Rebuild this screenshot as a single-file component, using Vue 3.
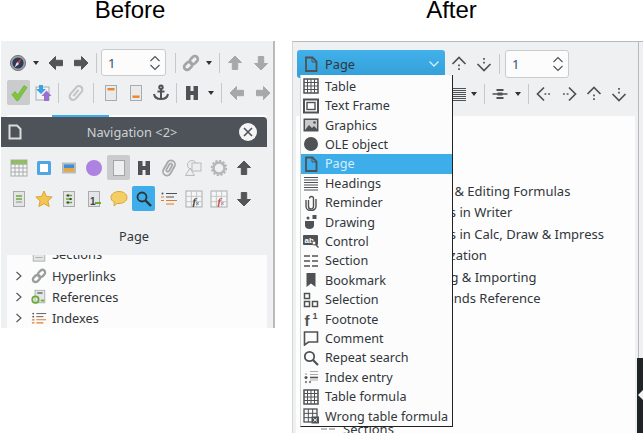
<script setup>
const dark = '#4f5254'
const gridLines = (x, y, w, h, nx, ny, col, sw = 1) => {
  let out = ''
  for (let i = 1; i < nx; i++) {
    const p = x + (w * i) / nx
    out += `<path d="M${p} ${y}V${y + h}" stroke="${col}" stroke-width="${sw}"/>`
  }
  for (let i = 1; i < ny; i++) {
    const p = y + (h * i) / ny
    out += `<path d="M${x} ${p}H${x + w}" stroke="${col}" stroke-width="${sw}"/>`
  }
  return out
}
const arrow = (col, rot) =>
  `<path transform="rotate(${rot} 9 9)" d="M2 9 8.500 2.500v3.800H15.500v5.400H8.500v3.800z" fill="${col}" stroke="${col}" stroke-linejoin="round"/>`
const dotted = (rot) =>
  `<g transform="rotate(${rot} 9 9)" fill="none" stroke="#4f5254" stroke-width="1.700"><path d="M2.500 9 9 2.500 15.500 9"/><path d="M9 9.500v1.800M9 13.200v1.800"/></g>`
const docBase = `<rect x="3.500" y="1.500" width="11" height="15" fill="#e4e5e6" stroke="#a9abad"/>`

const icons = {
  // toolbars
  compass: `<circle cx="9" cy="9" r="7.600" fill="#9b9da0" stroke="#77797c"/><circle cx="9" cy="9" r="5.600" fill="#2c3a5c"/><path d="M12.500 4.500 8 8l2 2z" fill="#d8402f"/><path d="M5.500 13.500 8 8l2 2z" fill="#e8e8e8"/>`,
  left: arrow('#555', 0),
  right: arrow('#555', 180),
  up: arrow('#555', 90),
  down: arrow('#555', 270),
  leftGray: arrow('#a6a8aa', 0),
  rightGray: arrow('#a6a8aa', 180),
  upGray: arrow('#a6a8aa', 90),
  downGray: arrow('#a6a8aa', 270),
  link: `<g transform="rotate(-45 9 9)" fill="none" stroke="#a2a4a6" stroke-width="2.600"><rect x="0.500" y="6" width="9" height="6" rx="3"/><rect x="8.500" y="6" width="9" height="6" rx="3"/></g>`,
  check: `<path d="M2 10.500 5 7.500l2.800 3.400L14 1.500l3 2L8.200 16.500H6.500z" fill="#7ec63b" stroke="#62a52a" stroke-width=".6"/>`,
  update: `<rect x="2" y="3" width="13" height="13" fill="#f2f3f4" stroke="#a9abad"/><path d="M5 1h4v4h3L7 10 2 5h3z" fill="#3da2e5"/><path d="M12.500 6.500 17.500 12H15v5h-5v-5H7.500z" fill="#9a6fd0"/>`,
  clipGray: `<g transform="rotate(40 9 9)" fill="none" stroke="#c1c3c5" stroke-width="2"><rect x="5.500" y="1" width="7" height="16" rx="3.500"/><path d="M9 5v8"/></g>`,
  header: `<rect x="3.500" y="1.500" width="11" height="15" fill="#e9eaeb" stroke="#a9abad"/><rect x="5.500" y="4" width="7" height="2.400" fill="#e8862a"/>`,
  footer: `<rect x="3.500" y="1.500" width="11" height="15" fill="#e9eaeb" stroke="#a9abad"/><rect x="5.500" y="11.500" width="7" height="2.400" fill="#e8862a"/>`,
  anchor: `<g fill="none" stroke="#505356" stroke-width="2"><circle cx="9" cy="3.200" r="1.700"/><path d="M9 5v10.500M5.500 7.500h7M2 10c.5 3.500 3.500 5 7 5s6.500-1.500 7-5"/></g>`,
  h: `<path d="M3 2h4.500v5h3V2H15v14h-4.500v-5h-3v5H3z" fill="#4f5254"/>`,
  strike: `<path d="M5.500 5h7M5.500 13h7" stroke="#4f5254" stroke-width="2"/><path d="M1.500 9H7M11 9h5.500" stroke="#4f5254" stroke-width="1.500"/><rect x="6.500" y="7.500" width="5" height="3" fill="#4f5254"/>`,
  lines: `<path d="M2 3.500h14M2 5.500h14M2 7.500h14M2 9.500h14M2 11.500h14M2 13.500h14M2 15.500h14" stroke="#4f5254" stroke-width="1"/>`,
  dotUp: dotted(0),
  dotDown: dotted(180),
  dotLeft: dotted(270),
  dotRight: dotted(90),

  // navigator panel
  navTable: `<rect x="1" y="1" width="16" height="16" fill="#f6f6f6" stroke="#a9abad"/><rect x="1" y="1" width="16" height="4.500" fill="#8cc44b"/>${gridLines(1, 1, 16, 16, 4, 4, '#a9abad')}`,
  navFrame: `<rect x="2" y="2" width="14" height="14" rx="1.500" fill="#4ea6e6"/><rect x="5" y="5" width="8" height="8" fill="#fff"/>`,
  navImage: `<rect x="2" y="3.500" width="14" height="11" fill="#b9bbbd"/><rect x="4" y="5.500" width="10" height="3.500" fill="#3d8fd8"/><rect x="4" y="9" width="10" height="3.500" fill="#eba53c"/>`,
  navOle: `<circle cx="9" cy="9" r="8" fill="#ae82e0"/>`,
  navPage: `<rect x="3.500" y="1.500" width="11" height="15" fill="#eeeff0" stroke="#a3a5a7"/>`,
  navClip: `<g transform="rotate(30 9 9)" fill="none" stroke="#a6a8aa" stroke-width="1.800"><rect x="5" y="1" width="8" height="16" rx="4"/><rect x="7.500" y="4" width="3" height="9" rx="1.500"/></g>`,
  navDraw: `<g fill="#eee" stroke="#b8babc"><circle cx="7" cy="6" r="4.500"/><rect x="7" y="4" width="9" height="8"/><path d="M5 9 9.500 16.500H.5z"/></g>`,
  navGear: `<circle cx="9" cy="9" r="5.500" fill="none" stroke="#b4b6b8" stroke-width="2.400"/><circle cx="9" cy="9" r="7.300" fill="none" stroke="#b4b6b8" stroke-width="1.800" stroke-dasharray="2.300 1.500"/>`,
  navHead: `${docBase}<path d="M6 6h6M6 9h6" stroke="#6aab35" stroke-width="1.500"/><path d="M6 12h6" stroke="#8e9092"/>`,
  navStar: `<path d="M9 1l2.400 5.400 5.800.6-4.300 3.900 1.200 5.700L9 13.700l-5.100 2.900 1.200-5.700L.8 7l5.800-.6z" fill="#f3c552" stroke="#dba436"/>`,
  navSection: `${docBase}<path d="M6 5.500h6M6 9h6M6 12.500h6" stroke="#6aab35" stroke-width="1.300"/><rect x="7" y="4.500" width="2" height="2" fill="#444"/><rect x="9.500" y="8" width="2" height="2" fill="#444"/><rect x="7" y="11.500" width="2" height="2" fill="#444"/>`,
  navNote: `${docBase}<text x="5" y="15" font-family="Liberation Sans" font-weight="700" font-size="10" fill="#444">1</text><path d="M10 13h6" stroke="#6aab35" stroke-width="2"/>`,
  navComment: `<path d="M9 1.500c4.500 0 8 2.500 8 6s-3.500 6-8 6c-.7 0-1.300 0-2-.2L4 16l.3-3.800C2.300 11.200 1 9.500 1 7.500c0-3.500 3.500-6 8-6z" fill="#f5ce63" stroke="#d5a63a"/>`,
  navSearch: `<circle cx="7" cy="7" r="4.500" fill="none" stroke="#2e3438" stroke-width="1.800"/><path d="M10.500 10.500 16 16" stroke="#2e3438" stroke-width="2.400"/>`,
  navIndex: `<path d="M6 3.500h11M6 7h8" stroke="#4f5254" stroke-width="1"/><path d="M1 7h3M1 10.500h3M6 10.500h11M6 14h8" stroke="#e07b2e" stroke-width="1.200"/><circle cx="2.500" cy="3.500" r="1" fill="#4f5254"/>`,
  navFx: `<rect x="1" y="1" width="16" height="16" fill="#f6f6f6" stroke="#a9abad"/>${gridLines(1, 1, 16, 16, 3, 3, '#c3c5c7')}<text x="7.500" y="15" font-family="Liberation Serif" font-style="italic" font-weight="700" font-size="11" fill="#444">f</text><text x="11" y="15" font-family="Liberation Sans" font-size="6" fill="#444">x</text>`,
  navFxRed: `<rect x="1" y="1" width="16" height="16" fill="#f6f6f6" stroke="#a9abad"/>${gridLines(1, 1, 16, 16, 3, 3, '#c3c5c7')}<text x="7.500" y="15" font-family="Liberation Serif" font-style="italic" font-weight="700" font-size="11" fill="#c0504d">f</text><text x="11" y="15" font-family="Liberation Sans" font-size="6" fill="#c0504d">x</text>`,
  navHyper: `<g transform="rotate(-45 9 9)" fill="none" stroke="#9a9c9e" stroke-width="2.600"><rect x="0.500" y="6" width="9" height="6" rx="3"/><rect x="8.500" y="6" width="9" height="6" rx="3"/></g>`,
  navRef: `<rect x="4.500" y="1.500" width="11" height="14" fill="#e4e5e6" stroke="#a9abad"/><path d="M7 4.500h6" stroke="#555" stroke-width="1.400"/><circle cx="5" cy="12" r="3.600" fill="none" stroke="#6aab35" stroke-width="2"/><rect x="11" y="12" width="4" height="2" fill="#6aab35"/>`,
  navIndexTree: `<path d="M6 4h11M6 7.500h8" stroke="#4f5254"/><path d="M6 11h11M6 14.500h8" stroke="#e07b2e" stroke-width="1.200"/><circle cx="2.500" cy="4" r="1" fill="#4f5254"/><circle cx="2.500" cy="7.500" r="1" fill="#4f5254"/><path d="M1 11h3M1 14.500h3" stroke="#e07b2e" stroke-width="1.400"/>`,
  navSections: `<rect x="2.500" y="1" width="13" height="16" fill="#e4e5e6" stroke="#a9abad"/><path d="M5 13h8" stroke="#a9abad"/>`
}

const menuIcons = {
  table: `<rect x="1" y="1" width="14" height="14" fill="none" stroke="${dark}" stroke-width="1.500"/>${gridLines(1, 1, 14, 14, 4, 4, dark)}`,
  frame: `<rect x="1" y="1.500" width="14" height="13" fill="none" stroke="${dark}" stroke-width="2"/><rect x="4" y="4.500" width="8" height="7" fill="none" stroke="${dark}" stroke-width="1.400"/>`,
  graphics: `<rect x=".5" y="1.500" width="15" height="13" fill="${dark}"/><rect x="2" y="3" width="12" height="10" fill="#c9cacb"/><path d="M2 13l4-5 3 3 2-2 3 3v1z" fill="${dark}"/><circle cx="11.500" cy="5.500" r="1.300" fill="${dark}"/>`,
  ole: `<circle cx="8" cy="8" r="7" fill="${dark}"/>`,
  page: `<path d="M3 1.500h6.500L13.500 5.500v9.500H3z" fill="none" stroke="${dark}" stroke-width="1.800"/><path d="M9 1.500v4.500h4.500" fill="none" stroke="${dark}" stroke-width="1"/>`,
  headings: `<path d="M1 2.500h14M1 5h14M1 7.500h14M1 10h14M1 12.500h14M1 15h14" stroke="${dark}" stroke-width="1"/>`,
  clip: `<g fill="none" stroke="${dark}" stroke-width="1.400"><path d="M5.500 5v6.500a2.500 2.500 0 0 0 5 0V3.500a2 2 0 0 0-4 0"/><path d="M3 5v6.500a5 4 0 0 0 10 0V4"/></g>`,
  drawing: `<path d="M2 7h9v4.500c0 2-1.800 3.500-4.500 3.500S2 13.500 2 11.500z" fill="${dark}"/><rect x="9.500" y="1" width="4" height="4" fill="${dark}"/><circle cx="5" cy="4" r="1.500" fill="${dark}"/>`,
  control: `<rect x="0" y="2" width="15" height="10" rx="1" fill="${dark}"/><text x="1.500" y="10" font-family="Liberation Sans" font-weight="700" font-size="8" fill="#fff">ab</text><circle cx="11" cy="10" r="2" fill="#fcfcfc" stroke="${dark}"/><path d="M12.500 11.500 15.500 14.500" stroke="${dark}" stroke-width="1.400"/>`,
  section: `<path d="M1 3h6M9 3h6M1 8h6M9 8h6M1 13h6M9 13h6" stroke="${dark}" stroke-width="1.500"/>`,
  bookmark: `<path d="M3.500 1h9v14L8 11.500 3.500 15z" fill="${dark}"/>`,
  selection: `<g fill="none" stroke="${dark}" stroke-width="1.500"><rect x="1.500" y="1.500" width="5" height="5"/><rect x="1.500" y="9.500" width="5" height="5"/><rect x="9.500" y="9.500" width="5" height="5"/></g>`,
  footnote: `<text x="1.500" y="15" font-family="Liberation Sans" font-weight="700" font-size="15" fill="${dark}">f</text><text x="9.500" y="8" font-family="Liberation Sans" font-weight="700" font-size="9" fill="${dark}">1</text>`,
  comment: `<path d="M1.500 2h13v10H5.500l-4 3z" fill="none" stroke="${dark}" stroke-width="1.600"/>`,
  search: `<circle cx="6.500" cy="6.500" r="4.700" fill="none" stroke="${dark}" stroke-width="1.800"/><path d="M10 10l5 5" stroke="${dark}" stroke-width="2.200"/>`,
  index: `<path d="M7 2.500h8M7 5.500h8M7 11h8" stroke="#a7a9ab" stroke-width="1.200"/><path d="M7 8.500h8" stroke="${dark}" stroke-width="1.600"/><circle cx="3" cy="8.500" r="1.500" fill="${dark}"/><circle cx="3" cy="13" r="1.200" fill="#8a8c8e"/><circle cx="7" cy="13" r="1.200" fill="#8a8c8e"/><circle cx="3" cy="5" r="1" fill="#b5b7b9"/>`,
  formula: `<rect x="1" y="1" width="14" height="14" fill="none" stroke="${dark}" stroke-width="1.500"/>${gridLines(1, 1, 14, 14, 4, 4, dark)}`,
  wrong: `<rect x="1" y="1" width="13" height="13" fill="none" stroke="${dark}" stroke-width="1.300"/>${gridLines(1, 1, 13, 13, 3, 3, dark)}<rect x="8.500" y="8.500" width="7.500" height="7" fill="${dark}"/><path d="M10.500 10.500l3.500 3M14 10.500l-3.500 3" stroke="#fff"/>`
}

const b = (i, c = '') => ({ t: 'b', i, c })
const caret = (c = '') => ({ t: 'c', c })
const sep = (c = '') => ({ t: 's', c })
const spin = (c = '') => ({ t: 'n', c })

const beforeRow1 = [
  b('compass'), caret(), b('left'), b('right'), sep(), spin('spin-a'), sep(),
  b('link'), caret(), sep(), b('upGray'), b('downGray', 'ml1')
]
const beforeRow2 = [
  b('check', 'checked'), b('update'), sep(), b('clipGray', 'ml2'), sep('ml2'),
  b('header', 'ml2'), b('footer'), b('anchor'), sep(), b('h'), caret('ml1'), sep(),
  b('leftGray'), b('rightGray', 'ml1')
]
const afterRow1 = [b('dotUp', 'ml1'), b('dotDown'), sep(), spin('spin-b')]
const afterRow2 = [
  b('lines'), caret('ml-3'), sep(), b('strike'), caret(), sep(),
  b('dotLeft'), b('dotRight'), b('dotUp'), b('dotDown')
]

const navRow1 = [
  { i: 'navTable' }, { i: 'navFrame' }, { i: 'navImage' }, { i: 'navOle' },
  { i: 'navPage', on: 'gray' }, { i: 'h' }, { i: 'navClip' }, { i: 'navDraw' },
  { i: 'navGear' }, { i: 'up' }
]
const navRow2 = [
  { i: 'navHead' }, { i: 'navStar' }, { i: 'navSection' }, { i: 'navNote' },
  { i: 'navComment' }, { i: 'navSearch', on: 'blue' }, { i: 'navIndex' }, { i: 'navFx' },
  { i: 'navFxRed' }, { i: 'down' }
]
const treeRows = [
  { label: 'Sections', icon: 'navSections', plain: true },
  { label: 'Hyperlinks', icon: 'navHyper' },
  { label: 'References', icon: 'navRef' },
  { label: 'Indexes', icon: 'navIndexTree' }
]

const menu = [
  ['Table', 'table'], ['Text Frame', 'frame'], ['Graphics', 'graphics'], ['OLE object', 'ole'],
  ['Page', 'page'], ['Headings', 'headings'], ['Reminder', 'clip'], ['Drawing', 'drawing'],
  ['Control', 'control'], ['Section', 'section'], ['Bookmark', 'bookmark'], ['Selection', 'selection'],
  ['Footnote', 'footnote'], ['Comment', 'comment'], ['Repeat search', 'search'], ['Index entry', 'index'],
  ['Table formula', 'formula'], ['Wrong table formula', 'wrong']
]

const chapters = [
  'Creating & Editing Formulas',
  'Formulas in Writer',
  'Formulas in Calc, Draw & Impress',
  'Customization',
  'Exporting & Importing',
  'Commands Reference'
]
</script>

<template>
  <div class="page">
    <section class="col before">
      <h2 class="title">Before</h2>
      <div class="win">
        <div class="toolbar">
          <div v-for="(row, r) in [beforeRow1, beforeRow2]" :key="r" class="row" :class="'row' + r">
            <template v-for="(it, n) in row" :key="n">
              <span v-if="it.t === 'b'" class="btn" :class="it.c"><svg width="18" height="18" viewBox="0 0 18 18" v-html="icons[it.i]"></svg></span>
              <span v-else-if="it.t === 'c'" class="caret" :class="it.c"></span>
              <span v-else-if="it.t === 's'" class="sep" :class="it.c"></span>
              <span v-else class="spin" :class="it.c">
                <span>1</span>
                <svg width="12" height="18" viewBox="0 0 12 18"><path d="M1.500 7 6 2.500 10.500 7M1.500 11 6 15.500 10.500 11" fill="none" stroke="#4f5254" stroke-width="1.100"/></svg>
              </span>
            </template>
          </div>
        </div>
        <div class="tabline"><span></span></div>
        <div class="nav">
          <header class="nav-head">
            <svg width="14" height="16" viewBox="0 0 14 16"><path d="M1.500 1.500H9L12.500 5v9.500h-11z" fill="#4d5359" stroke="#dcdcdc" stroke-width="2"/></svg>
            <span class="nav-title">Navigation &lt;2&gt;</span>
            <span class="close"><svg width="18" height="18" viewBox="0 0 18 18"><circle cx="9" cy="9" r="9" fill="#f4f4f4"/><path d="M5 5l8 8M13 5l-8 8" stroke="#4d5359" stroke-width="1.600"/></svg></span>
          </header>
          <div class="nav-body">
            <div v-for="(row, r) in [navRow1, navRow2]" :key="r" class="nav-row">
              <span v-for="it in row" :key="it.i" class="nav-btn" :class="it.on">
                <svg width="18" height="18" viewBox="0 0 18 18" v-html="icons[it.i]"></svg>
              </span>
            </div>
            <div class="nav-label">Page</div>
          </div>
          <div class="tree">
            <div v-for="row in treeRows" :key="row.label" class="tree-row">
              <svg v-if="!row.plain" class="chev" width="8" height="10" viewBox="0 0 8 10"><path d="M1.500 1 6 5 1.500 9" fill="none" stroke="#4f5254" stroke-width="1.100"/></svg>
              <span v-else class="chev-gap"></span>
              <svg width="16" height="16" viewBox="0 0 18 18" v-html="icons[row.icon]"></svg>
              <span>{{ row.label }}</span>
            </div>
          </div>
        </div>
      </div>
    </section>

    <section class="col after">
      <h2 class="title">After</h2>
      <div class="win">
        <div class="main">
          <div class="toolbar">
            <div class="row row-a">
              <div class="combo">
                <svg width="16" height="16" viewBox="0 0 16 16" v-html="menuIcons.page"></svg>
                <span>Page</span>
                <svg class="combo-chev" width="12" height="8" viewBox="0 0 12 8"><path d="M1.500 1.500 6 6l4.500-4.500" fill="none" stroke="#d4eefb" stroke-width="1.300"/></svg>
              </div>
              <template v-for="(it, n) in afterRow1" :key="n">
                <span v-if="it.t === 'b'" class="btn" :class="it.c"><svg width="18" height="18" viewBox="0 0 18 18" v-html="icons[it.i]"></svg></span>
                <span v-else-if="it.t === 's'" class="sep"></span>
                <span v-else class="spin" :class="it.c">
                  <span>1</span>
                  <svg width="12" height="18" viewBox="0 0 12 18"><path d="M1.500 7 6 2.500 10.500 7M1.500 11 6 15.500 10.500 11" fill="none" stroke="#4f5254" stroke-width="1.100"/></svg>
                </span>
              </template>
            </div>
            <div class="row row-b">
              <template v-for="(it, n) in afterRow2" :key="n">
                <span v-if="it.t === 'b'" class="btn"><svg width="18" height="18" viewBox="0 0 18 18" v-html="icons[it.i]"></svg></span>
                <span v-else-if="it.t === 'c'" class="caret" :class="it.c"></span>
                <span v-else class="sep"></span>
              </template>
            </div>
          </div>
          <div class="doc-tree">
            <div v-for="c in chapters" :key="c" class="chapter">{{ c }}</div>
            <div class="sub">
              <svg width="15" height="10" viewBox="0 0 15 10"><path d="M0 5h6M8 5h6" stroke="#a7a9ab" stroke-width="1.500"/></svg>
              <span>Sections</span>
            </div>
          </div>
        </div>
        <div class="rail">
          <div class="rail-top"></div>
          <div class="rail-dark"><i></i></div>
        </div>

        <ul class="menu">
          <li v-for="[label, icon] in menu" :key="label" :class="{ hot: label === 'Page' }">
            <svg width="16" height="16" viewBox="0 0 16 16" v-html="menuIcons[icon]"></svg>
            <span>{{ label }}</span>
          </li>
        </ul>
      </div>
    </section>
  </div>
</template>

<style scoped>
.page {
  display: flex;
  width: 643px;
  height: 433px;
  overflow: hidden;
  background: #fff;
  color: #31363b;
  font-family: "Noto Sans", sans-serif;
  font-size: 12.8px;
}

.col {
  display: flex;
  flex-direction: column;
}
.before { width: 275px; }
.after { width: 351px; margin-left: 17px; }

.title {
  height: 41px;
  margin: 0;
  color: #000;
  font: 400 24px/20px "Liberation Sans", sans-serif;
  text-align: center;
  box-sizing: border-box;
}
.before .title { padding-right: 15px; }
.after .title { padding-right: 32px; }

.before .win {
  height: 287px;
  background: #eff0f1;
  border-right: 2px solid #b9babb;
  margin-left: 1px;
}

.before .toolbar {
  padding-top: 8px;
}
.row {
  display: flex;
  align-items: center;
}
.row0 { height: 27px; padding-left: 4px; margin-bottom: 4px; }
.row1 { height: 25px; padding-left: 6px; }

.btn {
  flex: none;
  width: 25px;
  height: 25px;
  display: flex;
  align-items: center;
  justify-content: center;
}
.btn.checked {
  width: 23px;
  background: #c9cbcd;
  border-radius: 2px;
}
.ml1 { margin-left: 1px; }
.ml2 { margin-left: 2px; }

.caret {
  flex: none;
  width: 13px;
  position: relative;
  height: 4px;
}
.caret::after {
  content: "";
  position: absolute;
  left: 3px;
  top: 0;
  border: 3px solid transparent;
  border-top: 4px solid #2f3336;
  border-bottom: 0;
}
.caret.ml-3 { margin-left: -3px; }
.caret.ml1 { margin-left: 1px; }

.sep {
  flex: none;
  width: 1px;
  height: 20px;
  margin: 0 2px 0 3px;
  background: #c5c7c9;
}
.sep.ml2 { margin-left: 5px; }

.spin {
  flex: none;
  display: flex;
  align-items: center;
  justify-content: space-between;
  box-sizing: border-box;
  background: #fcfcfc;
  border: 1px solid #c9cbcd;
  border-radius: 3px;
  padding: 0 4px 0 6px;
  color: #31506e;
  font-size: 13px;
}
.spin-a { width: 65px; height: 27px; margin: 0 6px 0 2px; }
.spin-b { width: 64px; height: 28px; margin-left: 3px; }

.tabline {
  height: 2px;
  margin: 10px 6px 0;
  background: #fcfcfc;
}
.tabline span {
  display: block;
  width: 57px;
  height: 2px;
  margin-left: 45px;
  background: #3daee9;
}

.nav { width: 266px; }
.nav-head {
  display: flex;
  align-items: center;
  position: relative;
  height: 30px;
  padding-left: 7px;
  box-sizing: border-box;
  border-top-right-radius: 4px;
  background: #4d5359;
}
.nav-title {
  position: absolute;
  left: 0;
  right: 4px;
  text-align: center;
  color: #cfd1d3;
}
.close {
  position: absolute;
  right: 10px;
  top: 6px;
  line-height: 0;
}

.nav-body {
  position: relative;
  z-index: 1;
  height: 108px;
  padding-top: 8px;
  box-sizing: border-box;
  background: #eff0f1;
  border-bottom-right-radius: 3px;
}
.nav-row {
  display: flex;
  height: 25px;
  margin-bottom: 6px;
  padding-left: 5px;
}
.nav-btn {
  flex: none;
  width: 25px;
  height: 25px;
  display: flex;
  align-items: center;
  justify-content: center;
  border-radius: 2px;
}
.nav-btn.gray { width: 23px; margin: 0 1px; background: #c9cbcd; }
.nav-btn.blue { width: 23px; margin: 0 1px; background: #3daee9; }
.nav-label {
  margin-top: 13px;
  text-align: center;
  line-height: 24px;
}

.tree {
  display: flex;
  flex-direction: column;
  justify-content: flex-end;
  height: 73px;
  margin-left: 6px;
  overflow: hidden;
  background: #fcfcfc;
}
.tree-row {
  flex: none;
  display: flex;
  align-items: center;
  height: 21.4px;
  position: relative;
  top: 1px;
  padding-left: 8px;
}
.chev { margin-right: 8px; }
.chev-gap { width: 16px; }
.tree-row span:last-child { margin-left: 5px; }

/* after window */
.after .win {
  position: relative;
  display: flex;
  height: 392px;
  box-sizing: border-box;
  border-top: 1px solid #b9babb;
  border-left: 1px solid #d5d6d7;
  background: #eff0f1;
}
.main {
  display: flex;
  flex-direction: column;
  width: 345px;
}
.after .toolbar {
  height: 74px;
  padding-top: 8px;
  box-sizing: border-box;
}
.row-a { height: 28px; padding-left: 4px; }
.row-b { height: 26px; margin-top: 3px; padding-left: 153px; }

.combo {
  flex: none;
  display: flex;
  align-items: center;
  width: 148px;
  height: 28px;
  box-sizing: border-box;
  padding: 0 5px 0 6px;
  border-radius: 3px;
  background: linear-gradient(#42b0ea, #329fd8);
}
.combo span { margin-left: 6px; }
.combo-chev { margin-left: auto; }

.doc-tree {
  flex: 1;
  margin: 0 3px;
  padding: 65px 0 0 103px;
  box-sizing: border-box;
  overflow: hidden;
  background: #fdfdfd;
  font-size: 13px;
}
.chapter {
  height: 21.4px;
  line-height: 21.4px;
  white-space: nowrap;
}
.chapter:nth-child(6) { margin-left: 7px; }
.sub {
  display: flex;
  align-items: center;
  gap: 7px;
  margin: 109px 0 0 -78px;
  height: 21.4px;
}

.rail {
  flex: 1;
  display: flex;
  flex-direction: column;
}
.rail-top {
  height: 316px;
  border-left: 1px solid #b9babb;
}
.rail-dark {
  position: relative;
  flex: 1;
  margin-left: -1px;
  background: #1f2527;
}
.rail-dark i {
  position: absolute;
  top: 32px;
  right: 0;
  border: 5px solid transparent;
  border-right: 5px solid #f2f2f2;
  border-left: 0;
}

.menu {
  position: absolute;
  left: 7px;
  top: 33px;
  z-index: 2;
  width: 153px;
  height: 352px;
  box-sizing: border-box;
  margin: 0;
  padding: 1.500px 0 0;
  list-style: none;
  font-size: 12.6px;
  background: #fcfcfc;
  border-left: 1px solid #d0d1d2;
  border-right: 1px solid #222;
  border-bottom: 1px solid #222;
}
.menu li {
  display: flex;
  align-items: center;
  height: 19.41px;
  padding-left: 2px;
  white-space: nowrap;
}
.menu li span { margin-left: 6px; }
.menu svg { flex: none; }
.menu li.hot {
  background: #3daee9;
  color: #d6eefb;
}
</style>
